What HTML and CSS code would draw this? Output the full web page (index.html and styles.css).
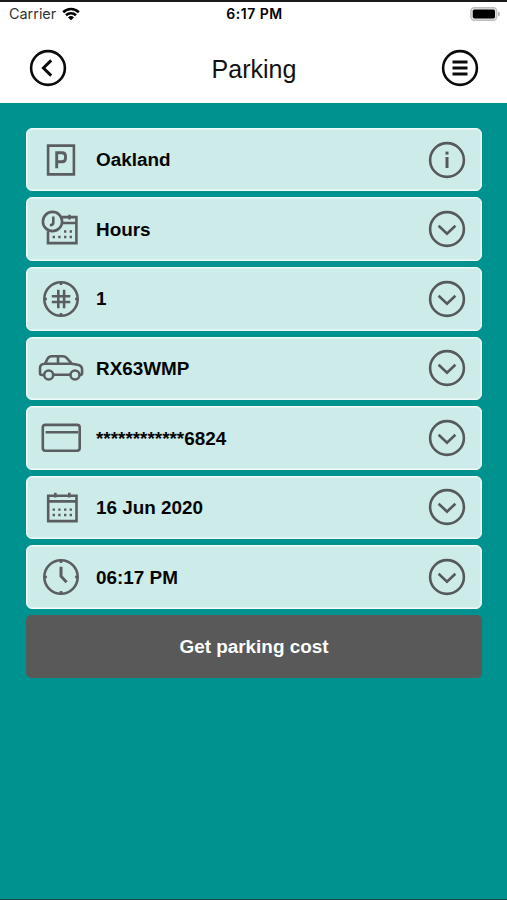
FILE: index.html
```html
<!DOCTYPE html>
<html lang="en">
<head>
<meta charset="utf-8">
<title>Parking</title>
<link rel="stylesheet" href="styles.css">
</head>
<body>
<div class="screen">
  <header class="top">
    <div class="status">
      <div class="carrier">
        <span>Carrier</span>
        <svg class="wifi" viewBox="0 0 18 14"><path d="M1.2 5.2a11.2 11.2 0 0 1 15.6 0M4 8.3a7.2 7.2 0 0 1 10 0" fill="none" stroke="#000" stroke-width="2.6"/><path d="M9 13.3 6 10.5a4.3 4.3 0 0 1 6 0z"/></svg>
      </div>
      <div class="time">6:17 PM</div>
      <svg class="battery" viewBox="0 0 30 14"><rect x=".8" y=".6" width="26" height="12.8" rx="3.6" fill="#dedede" stroke="#bcbcbc" stroke-width="1.2"/><rect x="2.8" y="2.4" width="22.2" height="9.2" rx="1.8"/><path d="M28 4.6q2 .8 2 2.4t-2 2.4z" fill="#b5b5b5"/></svg>
    </div>
    <nav class="nav">
      <svg class="nav-icon" viewBox="-19 -19 38 38"><circle r="16.9"/><path d="M3.2-7.6-4.6 0l7.8 7.6" stroke-width="2.9"/></svg>
      <h1 class="title">Parking</h1>
      <svg class="nav-icon" viewBox="-19 -19 38 38"><circle r="16.9"/><path d="M-7.5-6h15M-7.5 0h15M-7.5 6h15" stroke-width="2.8"/></svg>
    </nav>
  </header>
  <main class="form">
    <div class="row">
      <svg class="icon" viewBox="-24 -24 48 48"><path d="M-12.9-14.4h25.8v28.8h-25.8z"/><path d="M-4.3 8.3V-7.2h5.3q3.5 0 3.5 3.5v1.9q0 3.5-3.5 3.5h-5.3" stroke-width="2.9"/></svg>
      <span class="label">Oakland</span>
      <svg class="action" viewBox="-19 -19 38 38"><circle r="16.9"/><path d="M0-3V8" stroke-width="3"/><path d="M0-8.4v3" stroke-width="3"/></svg>
    </div>
    <div class="row">
      <svg class="icon" viewBox="-24 -24 48 48"><circle cx="-8.5" cy="-7.5" r="9.6"/><path d="M-7.7-12.5v6.3q0 2.2-3.4 2.5M1-11.9h14.4v26h-28.4V2.2M2-6h13.4M8.5-14.2v4.6"/><path class="dots" d="M3 2.5h2.4M8.6 2.5H11M-8.4 8H-6M-2.8 8h2.4M3 8h2.4M8.6 8H11"/></svg>
      <span class="label">Hours</span>
      <svg class="action" viewBox="-19 -19 38 38"><circle r="16.9"/><path d="M-8.4-3.3 0 4.6l8.4-7.9"/></svg>
    </div>
    <div class="row">
      <svg class="icon" viewBox="-24 -24 48 48"><circle r="16.7"/><path d="M-2.7-9.3V9.3M3.1-9.3V9.3M-9.2-2.8H9.3M-9.2 3H9.3M0-16.7v2.6M0 16.7v-2.6M-16.7 0h2.6M16.7 0h-2.6"/></svg>
      <span class="label">1</span>
      <svg class="action" viewBox="-19 -19 38 38"><circle r="16.9"/><path d="M-8.4-3.3 0 4.6l8.4-7.9"/></svg>
    </div>
    <div class="row">
      <svg class="icon" viewBox="-24 -24 48 48"><circle cx="-12.3" cy="7" r="4.5"/><circle cx="14" cy="7" r="4.5"/><path d="M-16.8 7H-19q-2 0-2-2V0q0-4 5-4.2l2.6-5.2q1.3-2.4 4-2.4H1.8q2.2 0 3.8 1.7L11-4.2l5.7 1q4.4.8 4.4 5V5q0 2-2 2h-.6M-7.8 6.8H9.5M-16-4.2H11M-3-11.8v7.6"/></svg>
      <span class="label">RX63WMP</span>
      <svg class="action" viewBox="-19 -19 38 38"><circle r="16.9"/><path d="M-8.4-3.3 0 4.6l8.4-7.9"/></svg>
    </div>
    <div class="row">
      <svg class="icon" viewBox="-24 -24 48 48"><rect x="-18.2" y="-13.1" width="36.9" height="25.8" rx="2.6"/><path d="M-15.4-5.7h32.6"/></svg>
      <span class="label">************6824</span>
      <svg class="action" viewBox="-19 -19 38 38"><circle r="16.9"/><path d="M-8.4-3.3 0 4.6l8.4-7.9"/></svg>
    </div>
    <div class="row">
      <svg class="icon" viewBox="-24 -24 48 48"><path d="M-12.8-11.3h28.3v25.4h-28.3zM-12.8-5.6h28.3M-5.7-14.2v4.6M8.3-14.2v4.6"/><path class="dots" d="M-8.4 2.6H-6M-2.8 2.6h2.4M3 2.6h2.4M8.6 2.6H11M-8.4 8H-6M-2.8 8h2.4M3 8h2.4M8.6 8H11"/></svg>
      <span class="label">16 Jun 2020</span>
      <svg class="action" viewBox="-19 -19 38 38"><circle r="16.9"/><path d="M-8.4-3.3 0 4.6l8.4-7.9"/></svg>
    </div>
    <div class="row">
      <svg class="icon" viewBox="-24 -24 48 48"><circle r="16.7"/><path d="M0-10.3v9.5L5.6 5.2" stroke-width="3"/><path d="M0-16.7v2.6M0 16.7v-2.6M-16.7 0h2.6M16.7 0h-2.6"/></svg>
      <span class="label">06:17 PM</span>
      <svg class="action" viewBox="-19 -19 38 38"><circle r="16.9"/><path d="M-8.4-3.3 0 4.6l8.4-7.9"/></svg>
    </div>
    <button class="submit">Get parking cost</button>
  </main>
</div>
</body>
</html>
```

FILE: styles.css
```css
* { box-sizing: border-box; }
body { margin: 0; font-family: "Liberation Sans", sans-serif; }
.screen {
  height: 900px;
  background: #00928e;
  border-top: 2px solid #1a1a1a;
  border-bottom: 1px solid #0d4a48;
  overflow: hidden;
}
.top { height: 100.7px; background: #fff; }
.status {
  height: 23px;
  display: grid;
  grid-template-columns: 1fr auto 1fr;
  align-items: center;
  padding: 0 7px 0 9px;
  font: 15px/18px Inter, sans-serif;
  color: #000;
}
.carrier { display: flex; align-items: center; gap: 6px; color: #333; font-size: 14.4px; }
.wifi { width: 18px; height: 14px; }
.time { font-weight: 600; font-size: 14px; letter-spacing: .5px; }
.battery { width: 30px; height: 14px; justify-self: end; }
.nav {
  height: 85px;
  display: flex;
  align-items: center;
  justify-content: space-between;
  padding: 0 28px 0 29px;
}
.nav-icon { width: 38px; height: 38px; fill: none; stroke: #0a0a0a; stroke-width: 2.6; }
.title { margin: 0; padding-top: 3px; font-weight: 400; font-size: 25px; line-height: 30px; color: #111; }
.form {
  display: flex;
  flex-direction: column;
  gap: 6px;
  padding: 25.2px 25px 0 26px;
}
.row {
  height: 63.57px;
  display: flex;
  align-items: center;
  padding: 0 15px 0 10px;
  background: #cdebe9;
  border: 1px solid #f0fbfa;
  border-radius: 6px;
  box-shadow: inset 0 0 0 1px #dff3f2;
}
.icon { width: 48px; height: 48px; fill: none; stroke: #5b5e61; stroke-width: 2.6; }
.icon .dots { stroke-width: 2.4; }
.label {
  flex: 1;
  margin-left: 11px;
  padding-top: 1.4px;
  font-weight: 700;
  font-size: 18.9px;
  line-height: 24px;
  color: #050505;
}
.action { width: 38px; height: 38px; fill: none; stroke: #56595b; stroke-width: 2.6; }
.submit {
  height: 63.5px;
  padding: 1.4px 0 0;
  border: 0;
  border-radius: 5px;
  background: #595959;
  color: #fff;
  font: 700 18.9px/24px "Liberation Sans", sans-serif;
}
```
